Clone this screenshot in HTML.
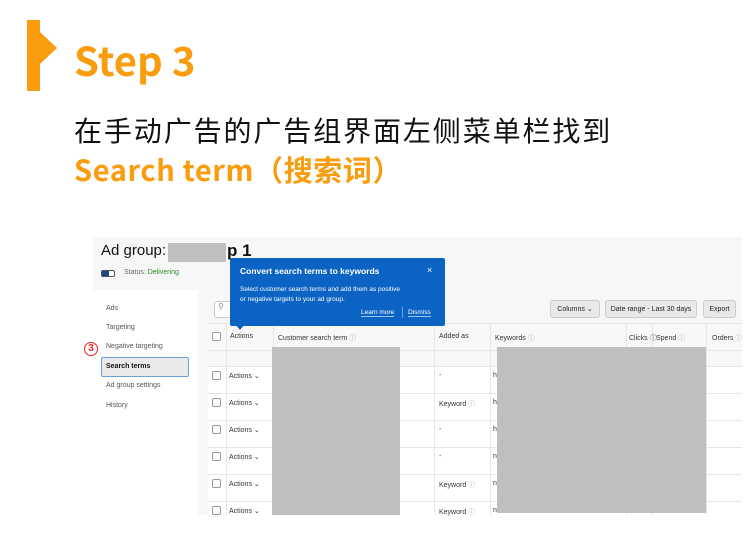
<!DOCTYPE html>
<html><head><meta charset="utf-8"><style>
*{margin:0;padding:0;box-sizing:border-box}
body{width:750px;height:550px;background:#fff;position:relative;overflow:hidden;font-family:"Liberation Sans","Noto Sans CJK SC",sans-serif}
.a{position:absolute}
.s{font-size:7px;color:#333;white-space:nowrap}
.cb{width:9px;height:9px;border:1px solid #999;border-radius:2px;background:#fff}
.hl{height:1px;background:#e6e6e6;left:208px;width:534px}
.vl{width:1px;background:#e6e6e6;top:323px;height:192px}
.btn{background:#e9e9e9;border:1px solid #ccc;border-radius:3px;font-size:7px;color:#222;text-align:center;line-height:17px;height:18px;top:300px}
</style></head><body>
<div class="a" style="left:27px;top:20px;width:13px;height:71px;background:#f99c0d"></div>
<div class="a" style="left:40px;top:32px;width:0;height:0;border-top:16px solid transparent;border-bottom:16px solid transparent;border-left:17px solid #f99c0d"></div>
<div class="a" style="left:74px;top:33px;font-size:40px;font-weight:bold;color:#f99c0d;font-family:'Noto Sans CJK SC',sans-serif;line-height:52px">Step 3</div>
<div class="a" style="left:74px;top:111px;font-size:28px;color:#111;font-family:'Noto Sans CJK SC',sans-serif;line-height:38px;letter-spacing:1.9px">在手动广告的广告组界面左侧菜单栏找到</div>
<div class="a" style="left:74px;top:150px;font-size:29px;font-weight:bold;color:#f99c0d;font-family:'Noto Sans CJK SC',sans-serif;line-height:38px;letter-spacing:0.6px">Search term（搜索词）</div>

<div class="a" style="left:93px;top:237px;width:649px;height:278px;background:#f7f7f7"></div>
<div class="a" style="left:101px;top:242px;font-size:15px;color:#111">Ad group:</div>
<div class="a" style="left:168px;top:243px;width:58px;height:19px;background:#bfbfbf"></div>
<div class="a" style="left:227px;top:241px;font-size:17px;color:#111;font-weight:bold">p 1</div>
<div class="a" style="left:101px;top:270px;width:14px;height:7px;border:1px solid #555;border-radius:2px;background:#fff"><div style="width:7px;height:5px;background:#1c4a80"></div></div>
<div class="a s" style="left:124px;top:269px;color:#666">Status: <span style="color:#2a8a2a">Delivering</span></div>

<div class="a" style="left:93px;top:290px;width:105px;height:225px;background:#fff"></div>
<div class="a s" style="left:106px;top:305px;color:#555">Ads</div>
<div class="a s" style="left:106px;top:324px;color:#555">Targeting</div>
<div class="a s" style="left:106px;top:343px;color:#555">Negative targeting</div>
<div class="a" style="left:101px;top:357px;width:88px;height:20px;border:1.5px solid #6aa0d8;border-radius:2px;background:#eaeaea"></div>
<div class="a s" style="left:106px;top:363px;font-weight:bold;color:#111">Search terms</div>
<div class="a s" style="left:106px;top:382px;color:#555">Ad group settings</div>
<div class="a s" style="left:106px;top:402px;color:#555">History</div>
<div class="a" style="left:84px;top:342px;width:14px;height:14px;border:1.5px solid #e22;border-radius:50%;color:#e22;font-size:10px;font-weight:bold;text-align:center;line-height:11px">3</div>

<div class="a" style="left:208px;top:295px;width:534px;height:220px;background:#fff"></div>
<div class="a" style="left:208px;top:295px;width:534px;height:28px;background:#f7f7f7"></div>
<div class="a" style="left:214px;top:301px;width:60px;height:17px;border:1px solid #ccc;border-radius:3px;background:#fff;font-size:8px;color:#888;padding-left:3px">&#9906;</div>
<div class="a btn" style="left:550px;width:50px">Columns &#8964;</div>
<div class="a btn" style="left:605px;width:92px">Date range - Last 30 days</div>
<div class="a btn" style="left:703px;width:33px">Export</div>
<div class="a" style="left:208px;top:323px;width:534px;height:43px;background:#f8f8f8"></div>
<div class="a hl" style="top:323px"></div>
<div class="a hl" style="top:350px"></div>
<div class="a hl" style="top:366px"></div>
<div class="a hl" style="top:393px"></div>
<div class="a hl" style="top:420px"></div>
<div class="a hl" style="top:447px"></div>
<div class="a hl" style="top:474px"></div>
<div class="a hl" style="top:501px"></div>
<div class="a vl" style="left:226px"></div>
<div class="a vl" style="left:273px"></div>
<div class="a vl" style="left:434px"></div>
<div class="a vl" style="left:490px"></div>
<div class="a vl" style="left:626px"></div>
<div class="a vl" style="left:652px"></div>
<div class="a vl" style="left:706px"></div>
<div class="a cb" style="left:212px;top:332px"></div>
<div class="a s" style="left:230px;top:333px">Actions</div>
<div class="a s" style="left:278px;top:333px">Customer search term <span style="color:#aaa">&#9432;</span></div>
<div class="a s" style="left:439px;top:333px">Added as</div>
<div class="a s" style="left:495px;top:333px">Keywords <span style="color:#aaa">&#9432;</span></div>
<div class="a s" style="left:629px;top:333px">Clicks &#9432;</div>
<div class="a s" style="left:656px;top:333px">Spend <span style="color:#aaa">&#9432;</span></div>
<div class="a s" style="left:712px;top:333px">Orders <span style="color:#aaa">&#9432;</span></div>

<div class="a cb" style="left:212px;top:371px"></div><div class="a s" style="left:229px;top:372px">Actions &#8964;</div><div class="a s" style="left:439px;top:372px">-</div>
<div class="a cb" style="left:212px;top:398px"></div><div class="a s" style="left:229px;top:399px">Actions &#8964;</div><div class="a s" style="left:439px;top:399px">Keyword <span style="color:#aaa">&#9432;</span></div>
<div class="a cb" style="left:212px;top:425px"></div><div class="a s" style="left:229px;top:426px">Actions &#8964;</div><div class="a s" style="left:439px;top:426px">-</div>
<div class="a cb" style="left:212px;top:452px"></div><div class="a s" style="left:229px;top:453px">Actions &#8964;</div><div class="a s" style="left:439px;top:453px">-</div>
<div class="a cb" style="left:212px;top:479px"></div><div class="a s" style="left:229px;top:480px">Actions &#8964;</div><div class="a s" style="left:439px;top:480px">Keyword <span style="color:#aaa">&#9432;</span></div>
<div class="a cb" style="left:212px;top:506px"></div><div class="a s" style="left:229px;top:507px">Actions &#8964;</div><div class="a s" style="left:439px;top:507px">Keyword <span style="color:#aaa">&#9432;</span></div>
<div class="a s" style="left:493px;top:372px">h</div><div class="a s" style="left:493px;top:399px">h</div><div class="a s" style="left:493px;top:426px">h</div><div class="a s" style="left:493px;top:453px">n</div><div class="a s" style="left:493px;top:480px">n</div><div class="a s" style="left:493px;top:507px">n</div>

<div class="a" style="left:272px;top:347px;width:128px;height:168px;background:#bfbfbf"></div>
<div class="a" style="left:497px;top:347px;width:209px;height:166px;background:#bfbfbf"></div>

<div class="a" style="left:230px;top:258px;width:215px;height:68px;background:#0b63c4;border-radius:2px;color:#fff"></div>
<div class="a" style="left:235px;top:324px;width:0;height:0;border-left:5px solid transparent;border-right:5px solid transparent;border-top:6px solid #0b63c4"></div>
<div class="a" style="left:240px;top:266px;font-size:8.5px;font-weight:bold;color:#fff;white-space:nowrap">Convert search terms to keywords</div>
<div class="a" style="left:427px;top:265px;font-size:9px;color:#fff">×</div>
<div class="a" style="left:240px;top:285px;font-size:6.5px;color:#fff;line-height:10px;white-space:nowrap">Select customer search terms and add them as positive<br>or negative targets to your ad group.</div>
<div class="a" style="left:361px;top:309px;font-size:6.5px;color:#fff;border-bottom:1px solid #9cc4ef">Learn more</div>
<div class="a" style="left:402px;top:307px;width:1px;height:11px;background:#6aa0dd"></div>
<div class="a" style="left:408px;top:309px;font-size:6.5px;color:#fff;border-bottom:1px solid #9cc4ef">Dismiss</div>
</body></html>
